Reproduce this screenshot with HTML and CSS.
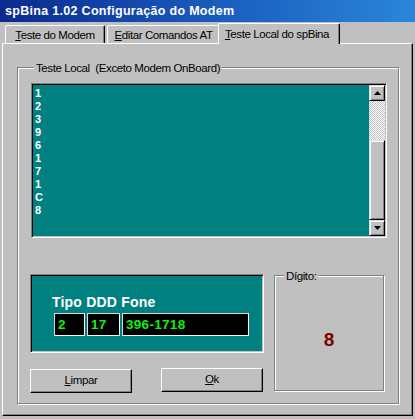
FILE: index.html
```html
<!DOCTYPE html>
<html>
<head>
<meta charset="utf-8">
<link rel="stylesheet" href="styles.css">
</head>
<body>
<div class="window">
  <div class="titlebar">spBina 1.02 Configuração do Modem</div>
  <div class="tabs">
    <div class="tab t1"><u>T</u>este do Modem</div>
    <div class="tab t2"><u>E</u>ditar Comandos AT</div>
    <div class="tab t3 active"><u>T</u>este Local do spBina</div>
  </div>
  <div class="page">
    <div class="group main">
      <span class="legend">Teste Local  (Exceto Modem OnBoard)</span>
      <div class="list">
        <div class="items">
          <div>1</div><div>2</div><div>3</div><div>9</div><div>6</div>
          <div>1</div><div>7</div><div>1</div><div>C</div><div>8</div>
        </div>
        <div class="scrollbar">
          <div class="sbtn raised"><svg width="7" height="4" viewBox="0 0 7 4"><polygon points="3.5,0 7,4 0,4" fill="#000"/></svg></div>
          <div class="track"></div>
          <div class="thumb raised"></div>
          <div class="sbtn raised"><svg width="7" height="4" viewBox="0 0 7 4"><polygon points="0,0 7,0 3.5,4" fill="#000"/></svg></div>
        </div>
      </div>
      <div class="bottom">
        <div class="leftcol">
          <div class="panel">
            <div class="ptitle">Tipo DDD Fone</div>
            <div class="fields">
              <div class="field f1">2</div>
              <div class="field f2">17</div>
              <div class="field f3">396-1718</div>
            </div>
          </div>
          <div class="buttons">
            <div class="btn"><u>L</u>impar</div>
            <div class="btn ok"><u>O</u>k</div>
          </div>
        </div>
        <div class="group digit">
          <span class="legend">Dígito:</span>
          <div class="digitval">8</div>
        </div>
      </div>
    </div>
  </div>
</div>
</body>
</html>
```
FILE: styles.css
```css
* { box-sizing: border-box; }
html, body { margin: 0; padding: 0; }
body {
  width: 415px;
  height: 419px;
  overflow: hidden;
  background: #c0c0c0;
  font-family: "Liberation Sans", Arial, sans-serif;
  font-size: 11.5px;
  letter-spacing: -0.4px;
  color: #000;
}
.window {
  width: 415px;
  height: 419px;
  display: flex;
  flex-direction: column;
}
.titlebar {
  height: 22px;
  background: linear-gradient(90deg, #0b2a8e 0%, #1a5fc0 55%, #2a86d8 100%);
  color: #fff;
  font-weight: bold;
  font-size: 12.5px;
  letter-spacing: 0.3px;
  line-height: 22px;
  padding-left: 5px;
  white-space: nowrap;
}
.tabs {
  height: 21px;
  display: flex;
  align-items: flex-end;
  padding-left: 5px;
}
.tab {
  height: 18px;
  padding-top: 2px;
  line-height: 14px;
  text-align: center;
  white-space: nowrap;
  border-top: 1px solid #fff;
  border-left: 1px solid #fff;
  border-right: 1px solid #000;
  box-shadow: inset -1px 0 0 #808080;
  border-top-left-radius: 2px;
  border-top-right-radius: 2px;
}
.t1 { width: 100px; }
.t2 { width: 113px; margin-left: 2px; }
.t3 {
  width: 122px;
  margin-left: -2px;
  height: 21px;
  margin-bottom: -1px;
  padding-top: 3px;
  padding-right: 4px;
  background: #c0c0c0;
  position: relative;
  z-index: 1;
}
.page {
  margin: 0 2px;
  height: 373px;
  border-top: 1px solid #fff;
  border-left: 1px solid #fff;
  border-right: 1px solid #000;
  border-bottom: 1px solid #000;
  box-shadow: inset -1px -1px 0 #808080;
  padding: 23px 0 0 14px;
}
.group {
  position: relative;
  border: 1px solid #808080;
  box-shadow: inset 1px 1px 0 #fff, 1px 1px 0 #fff;
}
.legend {
  position: absolute;
  background: #c0c0c0;
  padding: 0 2px;
  line-height: 14px;
  white-space: pre;
}
.main {
  width: 382px;
  height: 337px;
  padding: 15px 0 0 12px;
}
.main > .legend { left: 16px; top: -7px; }
.list {
  margin-left: 1px;
  width: 356px;
  height: 155px;
  display: flex;
  border: 1px solid;
  border-color: #808080 #fff #fff #808080;
  box-shadow: inset 1px 1px 0 #000, inset -1px -1px 0 #c0c0c0;
  padding: 1px;
}
.items {
  flex: 1;
  background: #008080;
  color: #fff;
  font-weight: bold;
  font-size: 11px;
  letter-spacing: 0;
  line-height: 13px;
  padding: 2px 0 0 2px;
}
.scrollbar {
  width: 16px;
  display: flex;
  flex-direction: column;
}
.raised {
  background: #c0c0c0;
  border: 1px solid;
  border-color: #dfdfdf #000 #000 #dfdfdf;
  box-shadow: inset 1px 1px 0 #fff, inset -1px -1px 0 #808080;
}
.sbtn {
  height: 16px;
  display: flex;
  align-items: center;
  justify-content: center;
}
.sbtn svg { display: block; }
.track {
  height: 39px;
  background-color: #c0c0c0;
  background-image: repeating-conic-gradient(#fff 0 25%, #c0c0c0 0 50%);
  background-size: 2px 2px;
}
.thumb { flex: 1; }
.bottom {
  display: flex;
  gap: 10px;
  margin-top: 36px;
  align-items: flex-start;
}
.leftcol {
  display: flex;
  flex-direction: column;
}
.panel {
  width: 234px;
  height: 79px;
  background: #008080;
  border: 1px solid;
  border-color: #808080 #fff #fff #808080;
  box-shadow: inset 1px 1px 0 #000, inset -1px -1px 0 #c0c0c0;
  padding: 19px 0 0 21px;
}
.ptitle {
  color: #fff;
  font-weight: bold;
  font-size: 14px;
  letter-spacing: 0.2px;
  line-height: 16px;
}
.fields {
  display: flex;
  gap: 2px;
  margin-top: 3px;
  margin-left: 2px;
}
.field {
  height: 23px;
  background: #000;
  border: 1px solid #fff;
  border-color: #d8d8d8 #fff #fff #d8d8d8;
  color: #11ee11;
  font-weight: bold;
  font-size: 13.5px;
  letter-spacing: 0.3px;
  line-height: 21px;
  padding-left: 3px;
}
.f1 { width: 31px; }
.f2 { width: 33px; }
.f3 { width: 127px; }
.buttons {
  display: flex;
  gap: 29px;
  margin-top: 16px;
  align-items: flex-start;
}
.btn {
  width: 102px;
  height: 24px;
  line-height: 21px;
  text-align: center;
  background: #c0c0c0;
  border: 1px solid;
  border-color: #fff #000 #000 #fff;
  box-shadow: inset -1px -1px 0 #808080;
}
.ok { margin-top: -1px; }
.digit {
  width: 110px;
  height: 116px;
  margin-top: 1px;
  padding-top: 53px;
}
.digit > .legend { left: 9px; top: -7px; }
.digitval {
  text-align: center;
  color: #800000;
  font-weight: bold;
  font-size: 19px;
  line-height: 22px;
  letter-spacing: 0;
}
```
